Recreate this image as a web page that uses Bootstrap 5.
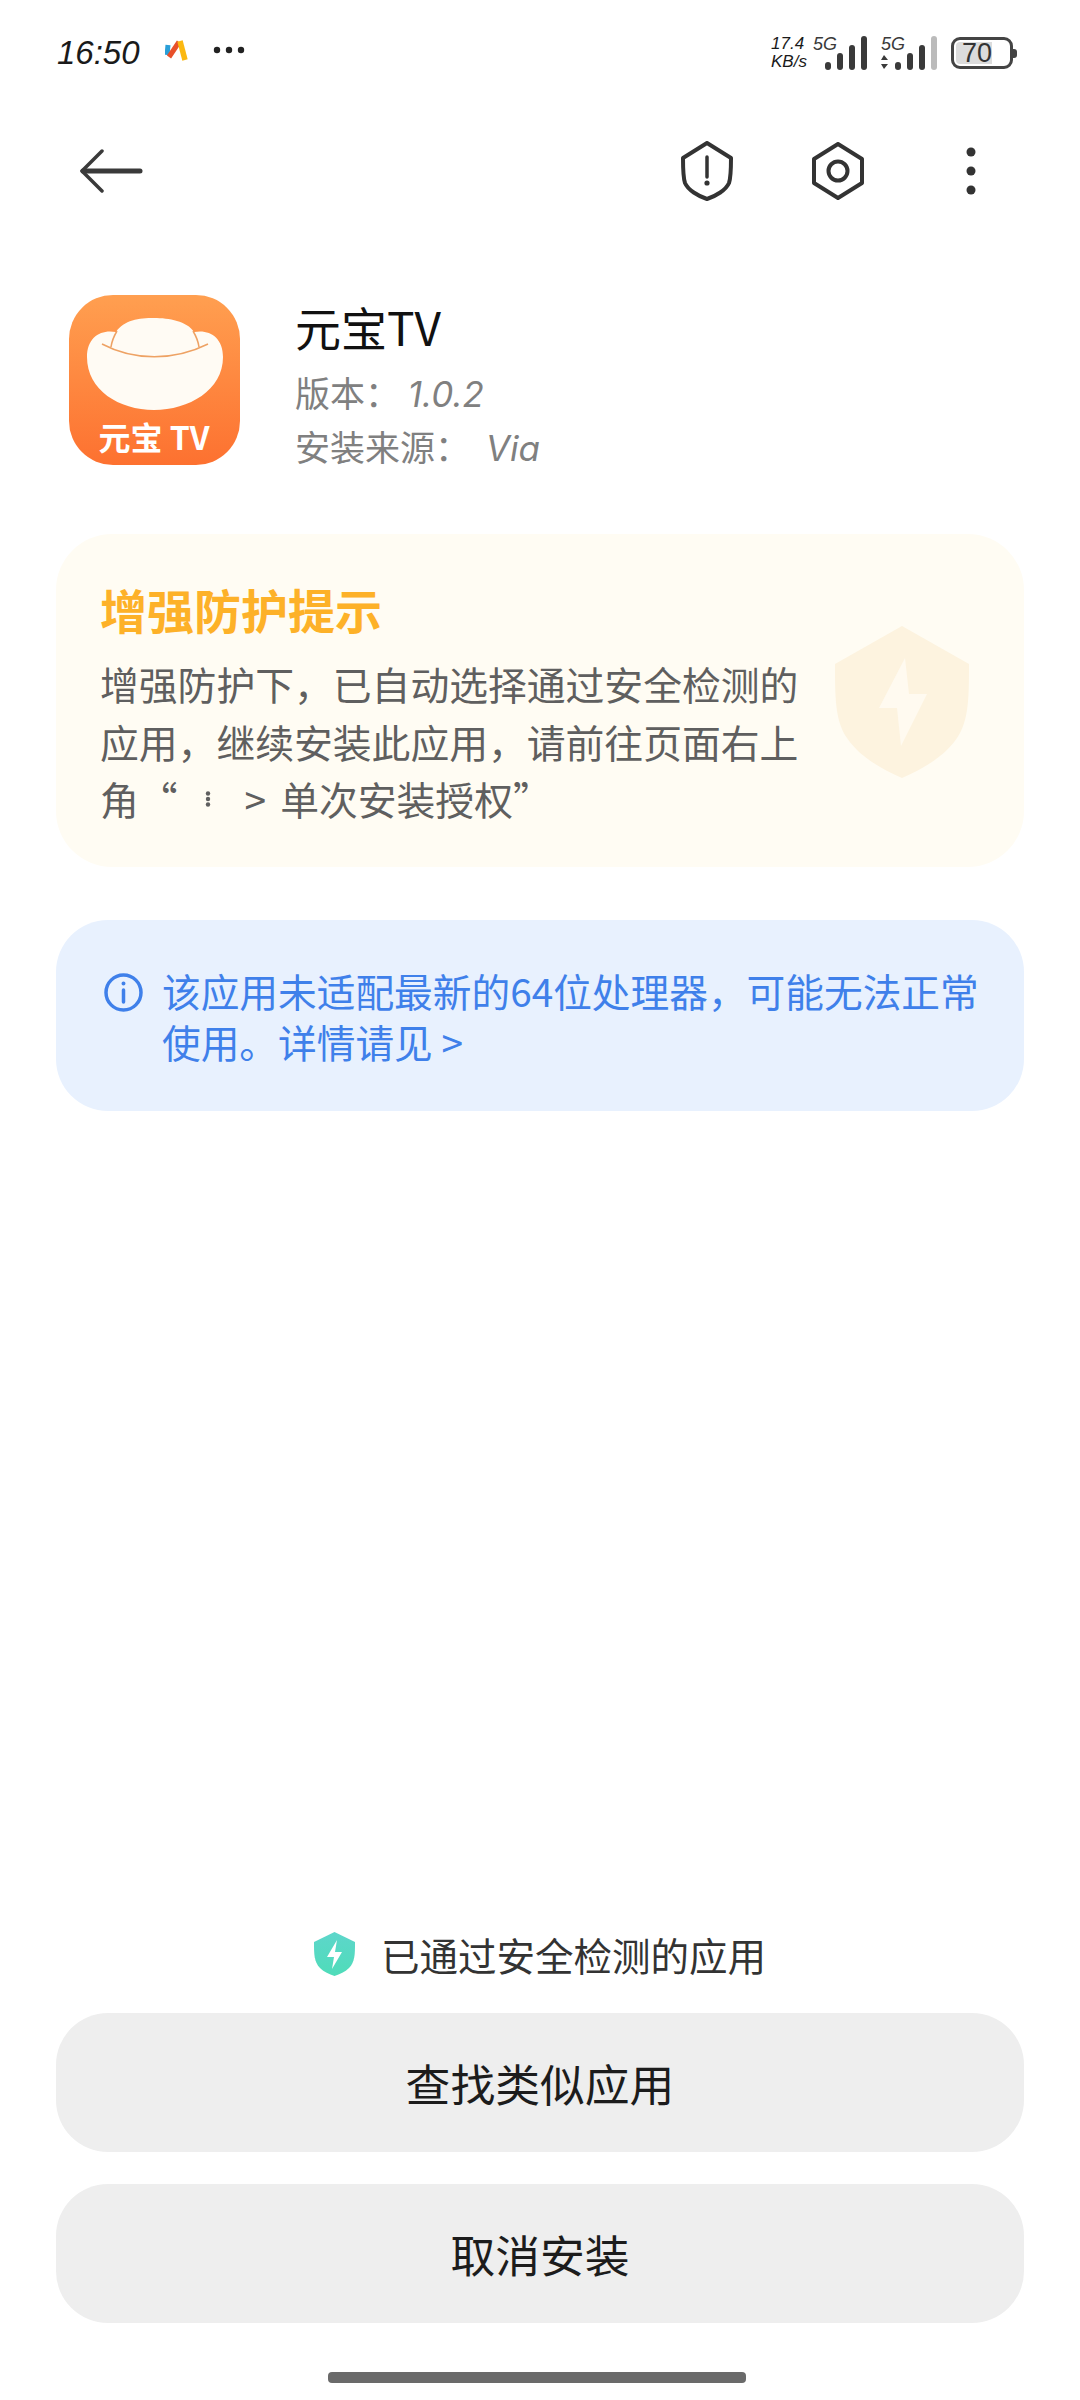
<!DOCTYPE html>
<html lang="zh-CN">
<head>
<meta charset="utf-8">
<title>元宝TV</title>
<link href="https://cdn.jsdelivr.net/npm/bootstrap@5.3.0/dist/css/bootstrap.min.css" rel="stylesheet">
<style>
html,body{margin:0;background:#fff;}
body{font-family:"Noto Sans CJK SC","Noto Sans",sans-serif;}
.scr{width:1080px;height:2400px;}
.sbar{height:100px;padding:0 63px 0 57px;color:#1a1a1a;}
.stime{font-size:33px;line-height:1;margin-top:4px;font-style:italic;font-family:"Liberation Sans",sans-serif;width:84px;white-space:nowrap;}
.sright{margin-top:6px;}
.sspeed{font-size:17px;line-height:18px;font-style:italic;font-family:"Liberation Sans",sans-serif;width:42px;}
.sg1{margin-left:14px;}
.sg2{margin-left:7px;}
.sbatt{width:62px;height:32px;border:3px solid #444;border-radius:9px;padding:2px;font-size:27px;line-height:22px;color:#333;font-family:"Liberation Sans",sans-serif;}
.sbatt-fill{width:70%;background:#dcdcdc;border-radius:4px 0 0 4px;height:22px;padding-left:6px;white-space:nowrap;}
.sbatt-nub{width:4px;height:9px;background:#444;border-radius:0 3px 3px 0;}
.tbar{height:142px;padding:0 104px 0 80px;}
.hexi{margin-left:76px;}
.dots{margin-left:100px;}
.appr{padding:53px 0 0 69px;}
.appc{margin-left:55px;}
.appt{font-size:46px;line-height:58px;color:#111;margin:2px 0 11px;}
.appm{font-size:35px;line-height:52px;color:#808080;}
.latn{font-family:"Inter",sans-serif;font-style:italic;}
.latn-b{margin-left:8px;}
.yc{margin:60px 56px 0 56px;height:333px;background:#fffcf3;border-radius:56px;padding:44px 55px 0 44px;}
.yc-h{font-size:47px;line-height:62px;font-weight:700;color:#fdb128;}
.yc-b{font-size:38.8px;line-height:57.5px;color:#5f5f5f;width:702px;}
.yc-b1{margin-top:15px;}
.yc-ic{margin-top:48px;}
.kebab{margin:0 34px 0 27px;}
.yc-t{margin-left:14px;}
.bc{margin:53px 56px 0 56px;height:191px;background:#e8f1fe;border-radius:52px;padding:45px 20px 0 48px;color:#3f80ea;}
.bc-ic{margin-top:8px;}
.bc-t{font-size:38.7px;line-height:51px;margin-left:19px;white-space:nowrap;}
.foot{margin-top:auto;padding:0 56px 17px 56px;}
.safe{font-size:38.5px;line-height:44px;color:#333;gap:26px;margin-bottom:37px;}
.ab{display:block;height:139px;background:#eee;border:0;border-radius:52px;font-size:44.8px;color:#1c1c1c;line-height:139px;padding:0;}
.ab:hover,.ab:active{background:#eee!important;color:#1c1c1c!important;}
.ab-g{gap:32px;}
.hpill{width:418px;height:11px;background:#6a6a6a;border-radius:4px;margin:49px 0 0 272px;}
</style>
</head>
<body>
<div class="scr d-flex flex-column">
  <div class="sbar d-flex align-items-center">
    <div class="stime">16:50</div>
    <svg class="ms-4" width="24" height="22" viewBox="0 0 24 22" aria-hidden="true"><path d="M2 16 L3 6" stroke="#2a9fd8" stroke-width="5"/><path d="M4 18 L14 3" stroke="#e8502a" stroke-width="5"/><path d="M15 2 L20 21" stroke="#fbb811" stroke-width="5.5"/></svg>
    <svg class="ms-4" width="32" height="8" viewBox="0 0 32 8" aria-hidden="true" fill="#222"><circle cx="4" cy="4" r="3.2"/><circle cx="16" cy="4" r="3.2"/><circle cx="28" cy="4" r="3.2"/></svg>
    <div class="ms-auto sright d-flex align-items-center">
      <div class="sspeed">17.4<br>KB/s</div>
      <svg width="54" height="36" viewBox="0 0 54 36" aria-hidden="true" fill="#3a3a3a"><text x="0" y="15" font-size="18" font-style="italic" font-family="Liberation Sans, sans-serif">5G</text><rect x="12" y="27" width="6" height="8" rx="3"/><rect x="24" y="18" width="6" height="17" rx="3"/><rect x="36" y="10" width="6" height="25" rx="3"/><rect x="48" y="1" width="6" height="34" rx="3"/></svg>
      <svg class="sg1" width="63" height="36" viewBox="0 0 63 36" aria-hidden="true" fill="#3a3a3a"><text x="0" y="15" font-size="18" font-style="italic" font-family="Liberation Sans, sans-serif">5G</text><path d="M3 20 L7 25 H0Z M3 34 L7 29 H0Z"/><rect x="14" y="27" width="6" height="8" rx="3"/><rect x="26" y="18" width="6" height="17" rx="3"/><rect x="38" y="10" width="6" height="25" rx="3"/><rect x="50" y="1" width="6" height="34" rx="3" fill="#bbb"/></svg>
      <div class="sg2 sbatt"><div class="sbatt-fill">70</div></div><div class="sbatt-nub"></div>
    </div>
  </div>

  <div class="tbar d-flex align-items-center">
    <svg width="64" height="44" viewBox="0 0 64 44" aria-hidden="true" fill="none" stroke="#3a3a3a" stroke-linecap="round" stroke-linejoin="round"><path d="M22 2 L2 22 L22 42" stroke-width="3.5"/><path d="M3 22 H60" stroke-width="5"/></svg>
    <div class="ms-auto d-flex align-items-center">
      <svg width="54" height="60" viewBox="0 0 54 60" aria-hidden="true" fill="none" stroke="#333" stroke-width="4" stroke-linejoin="round" stroke-linecap="round"><path d="M27 2 L51 17 C51 28 51 36 49 42 C46 49 36 55 27 58 C18 55 8 49 5 42 C3 36 3 28 3 17 Z"/><path d="M27 16 V36" stroke-width="3.5"/><circle cx="27" cy="42" r="1.6" fill="#333" stroke-width="2"/></svg>
      <svg class="hexi" width="56" height="58" viewBox="0 0 56 58" aria-hidden="true" fill="none" stroke="#333" stroke-width="4" stroke-linejoin="round"><path d="M28 2 L52 17 V41 L28 56 L4 41 V17 Z"/><circle cx="28" cy="29" r="9.5"/></svg>
      <svg class="dots" width="10" height="48" viewBox="0 0 10 48" aria-hidden="true" fill="#333"><circle cx="5" cy="5" r="4.5"/><circle cx="5" cy="24" r="4.5"/><circle cx="5" cy="43" r="4.5"/></svg>
    </div>
  </div>

  <div class="appr d-flex">
    <svg width="171" height="170" viewBox="0 0 171 170" role="img" aria-label="元宝TV">
      <defs><linearGradient id="og" x1="0" y1="0" x2="0" y2="1"><stop offset="0" stop-color="#ff9f50"/><stop offset="1" stop-color="#fd7130"/></linearGradient></defs>
      <rect width="171" height="170" rx="44" fill="url(#og)"/>
      <path d="M47 37 C55 25 70 23 85 23 C100 23 118 26 125 37 C140 34 154 42 154 62 C154 95 120 115 85 115 C50 115 18 95 18 62 C18 42 32 34 47 37 Z" fill="#fffbf4"/>
      <path d="M33 49 C65 66 105 66 139 49 M42 52 C43 45 45 41 48 36 M130 52 C129 45 127 41 124 36" fill="none" stroke="#eea264" stroke-width="1.5"/>
      <text x="85" y="155" text-anchor="middle" fill="#fff" font-size="32" font-weight="700" font-family="Noto Sans CJK SC, sans-serif">元宝 TV</text>
    </svg>
    <div class="appc">
      <div class="appt">元宝TV</div>
      <div class="appm">版本： <span class="latn">1.0.2</span></div>
      <div class="appm">安装来源： <span class="latn latn-b">Via</span></div>
    </div>
  </div>

  <div class="yc d-flex justify-content-between">
    <div>
      <div class="yc-h">增强防护提示</div>
      <div class="yc-b yc-b1">增强防护下，已自动选择通过安全检测的应用，继续安装此应用，请前往页面右上</div>
      <div class="yc-b d-flex align-items-center">
        <span>角“</span>
        <svg class="kebab" width="6" height="16" viewBox="0 0 6 16" aria-hidden="true" fill="#5f5f5f"><circle cx="3" cy="2.5" r="2.2"/><circle cx="3" cy="8" r="2.2"/><circle cx="3" cy="13.5" r="2.2"/></svg>
        <span>&gt;</span>
        <span class="yc-t">单次安装授权”</span>
      </div>
    </div>
    <svg class="yc-ic" width="134" height="152" viewBox="0 0 134 152" aria-hidden="true"><path d="M67 0 L134 38 C134 70 134 95 122 112 C110 130 88 143 67 152 C46 143 24 130 12 112 C0 95 0 70 0 38 Z" fill="#fdf3df"/><path d="M70 32 L44 82 L62 82 L66 120 L92 68 L74 68 Z" fill="#fffaf0"/></svg>
  </div>

  <div class="bc d-flex align-items-start">
    <svg class="flex-shrink-0 bc-ic" width="39" height="39" viewBox="0 0 39 39" aria-hidden="true" fill="none" stroke="#3f80ea" stroke-width="3.5"><circle cx="19.5" cy="19.5" r="17.5"/><path d="M19.5 17 V29" stroke-linecap="round"/><circle cx="19.5" cy="10.5" r="1.2" fill="#3f80ea" stroke-width="1.6"/></svg>
    <div class="bc-t">该应用未适配最新的64位处理器，可能无法正常<br>使用。详情请见 &gt;</div>
  </div>

  <div class="foot">
    <div class="safe d-flex justify-content-center align-items-center">
      <svg width="41" height="44" viewBox="0 0 41 44" aria-hidden="true"><defs><linearGradient id="tg" x1="0" y1="0" x2="0" y2="1"><stop offset="0" stop-color="#5dd6cb"/><stop offset="1" stop-color="#4fdcb9"/></linearGradient></defs><path d="M20.5 0 L41 10 C41 22 41 30 35 36 C31 40 26 42 20.5 44 C15 42 10 40 6 36 C0 30 0 22 0 10 Z" fill="url(#tg)"/><path d="M23 8 L13 25 L20 25 L18 37 L28 20 L21 20 Z" fill="#fff"/></svg>
      <span>已通过安全检测的应用</span>
    </div>
    <div class="d-flex flex-column ab-g">
      <button type="button" class="btn ab w-100">查找类似应用</button>
      <button type="button" class="btn ab w-100">取消安装</button>
    </div>
    <div class="hpill"></div>
  </div>
</div>
<script src="https://cdn.jsdelivr.net/npm/bootstrap@5.3.0/dist/js/bootstrap.bundle.min.js"></script>
</body>
</html>
